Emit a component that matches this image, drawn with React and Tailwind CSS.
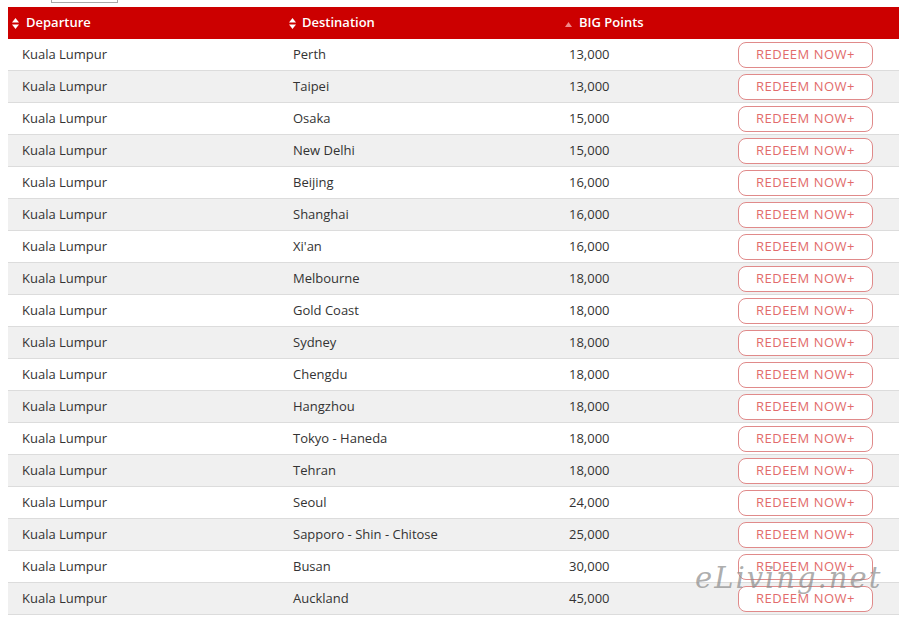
const rows = [
  ["Perth", "13,000"],
  ["Taipei", "13,000"],
  ["Osaka", "15,000"],
  ["New Delhi", "15,000"],
  ["Beijing", "16,000"],
  ["Shanghai", "16,000"],
  ["Xi'an", "16,000"],
  ["Melbourne", "18,000"],
  ["Gold Coast", "18,000"],
  ["Sydney", "18,000"],
  ["Chengdu", "18,000"],
  ["Hangzhou", "18,000"],
  ["Tokyo - Haneda", "18,000"],
  ["Tehran", "18,000"],
  ["Seoul", "24,000"],
  ["Sapporo - Shin - Chitose", "25,000"],
  ["Busan", "30,000"],
  ["Auckland", "45,000"],
];

const SortBoth = () => (
  <svg width="7" height="11" viewBox="0 0 7 11" className="shrink-0">
    <path d="M3.5 0 L7 4.6 H0 Z" fill="#fff" />
    <path d="M3.5 11 L7 6.4 H0 Z" fill="#fff" />
  </svg>
);

const SortUp = () => (
  <svg width="7" height="5" viewBox="0 0 7 5" className="shrink-0 mb-[6px]">
    <path d="M3.5 0 L7 5 H0 Z" fill="#f08a8a" />
  </svg>
);

const App = () => {
  return (
    <div
      className="relative w-[899px] h-[618px] bg-white overflow-hidden text-[13px] text-[#333]"
      style={{ fontFamily: '"Open Sans", "Liberation Sans", sans-serif' }}
    >
      <div className="ml-[51px] w-[67px] h-[3px] border border-t-0 border-[#aaa]" />
      <div className="ml-[8px] mt-[4px]">
        <div className="grid grid-cols-[271px_276px_169px_1fr] h-[32px] bg-[#cc0000] text-white font-semibold items-center">
          <div className="flex items-center gap-[7px] pl-[4px]">
            <SortBoth />
            <span>Departure</span>
          </div>
          <div className="flex items-center gap-[6px] pl-[10px]">
            <SortBoth />
            <span>Destination</span>
          </div>
          <div className="flex items-end gap-[7px] pl-[10px]">
            <SortUp />
            <span>BIG Points</span>
          </div>
          <div />
        </div>
        {rows.map(([dest, pts], i) => (
          <div
            key={i}
            className={`grid grid-cols-[271px_276px_169px_1fr] h-[32px] items-center border-b border-[#dcdcdc] ${
              i % 2 === 1 ? "bg-[#f0f0f0]" : "bg-white"
            }`}
          >
            <div className="pl-[14px]">Kuala Lumpur</div>
            <div className="pl-[14px]">{dest}</div>
            <div className="pl-[14px]">{pts}</div>
            <div className="pl-[14px] pt-[1px]">
              <button className="block w-[135px] h-[26px] rounded-[8px] border border-[#e08a8a] bg-white text-[#e26b6b] text-[13px] tracking-[0.5px]">
                REDEEM NOW+
              </button>
            </div>
          </div>
        ))}
      </div>
      <div
        className="absolute left-[695px] top-[558px] text-[29px] leading-[40px] italic text-[#8a8a8a]/70 pointer-events-none tracking-[2px]"
        style={{ fontFamily: '"DejaVu Serif", serif' }}
      >
        eLiving.net
      </div>
    </div>
  );
};

export default App;
